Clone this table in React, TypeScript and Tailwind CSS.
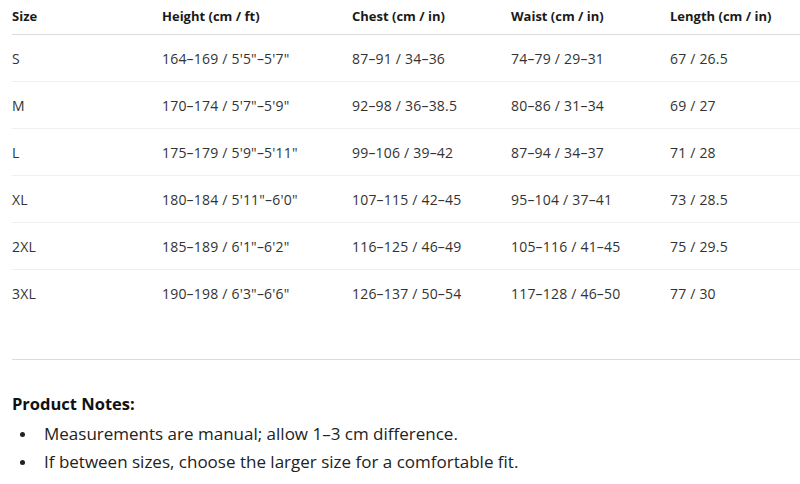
import React from 'react';

const rows = [
  ['S', `164–169 / 5'5"–5'7"`, '87–91 / 34–36', '74–79 / 29–31', '67 / 26.5'],
  ['M', `170–174 / 5'7"–5'9"`, '92–98 / 36–38.5', '80–86 / 31–34', '69 / 27'],
  ['L', `175–179 / 5'9"–5'11"`, '99–106 / 39–42', '87–94 / 34–37', '71 / 28'],
  ['XL', `180–184 / 5'11"–6'0"`, '107–115 / 42–45', '95–104 / 37–41', '73 / 28.5'],
  ['2XL', `185–189 / 6'1"–6'2"`, '116–125 / 46–49', '105–116 / 41–45', '75 / 29.5'],
  ['3XL', `190–198 / 6'3"–6'6"`, '126–137 / 50–54', '117–128 / 46–50', '77 / 30'],
];

const headers = ['Size', 'Height (cm / ft)', 'Chest (cm / in)', 'Waist (cm / in)', 'Length (cm / in)'];
const colW = ['w-[150px]', 'w-[190px]', 'w-[159px]', 'w-[159px]', 'w-[160px]'];

const notes = [
  'Measurements are manual; allow 1–3 cm difference.',
  'If between sizes, choose the larger size for a comfortable fit.',
];

export default function App() {
  return (
    <div className="w-[800px] h-[484px] overflow-hidden bg-white pl-3 text-[#333]" style={{ fontFamily: '"Open Sans", "Noto Sans", sans-serif' }}>
      <div className="w-[850px]">
        <div className="flex h-[35px] items-center border-b border-[#dcdcdc] text-[13px] font-bold text-[#1a1a1a]">
          {headers.map((h, i) => (
            <div key={h} className={`${colW[i]} shrink-0`}>{h}</div>
          ))}
        </div>
        {rows.map((r, ri) => (
          <div
            key={r[0]}
            className={`flex h-[47px] items-center text-[14px] tracking-[0.2px] ${ri < rows.length - 1 ? 'border-b border-[#efefef]' : ''}`}
          >
            {r.map((c, i) => (
              <div key={i} className={`${colW[i]} shrink-0`}>{c}</div>
            ))}
          </div>
        ))}
      </div>
      <div className="mt-[42px] border-t border-[#dcdcdc]" />
      <div className="pt-[33px]">
        <h3 className="text-[16.5px] font-bold leading-[22px] text-[#111]">Product Notes:</h3>
        <ul className="mt-[5px] text-[17px] leading-[28px] text-[#222]">
          {notes.map((n) => (
            <li key={n} className="flex items-center">
              <span className="ml-[8px] mr-[19px] h-[5px] w-[5px] rounded-full bg-[#222]" />
              <span>{n}</span>
            </li>
          ))}
        </ul>
      </div>
    </div>
  );
}
